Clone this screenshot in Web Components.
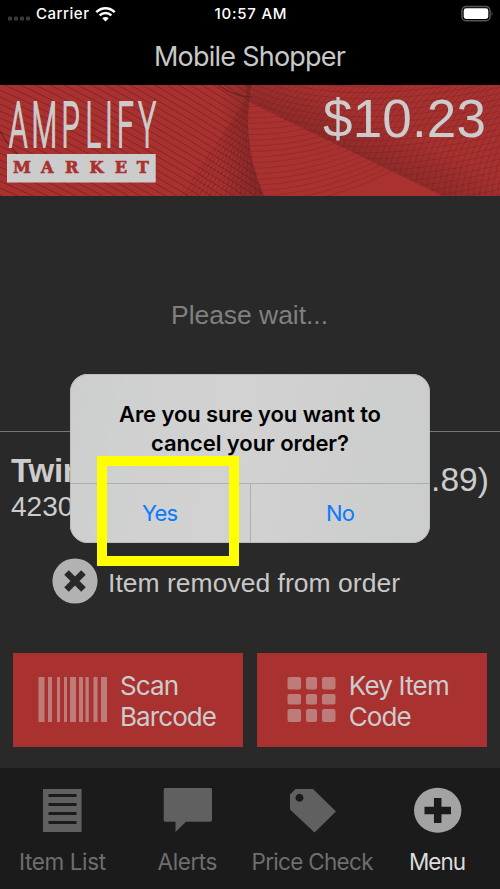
<!DOCTYPE html>
<html lang="en"><head><meta charset="utf-8"><title>Mobile Shopper</title>
<style>html,body{margin:0;background:#292929}</style></head>
<body><shopper-app></shopper-app>
<script>
const define = (name, html, setup) => customElements.define(name, class extends HTMLElement {
  constructor() {
    super();
    this.attachShadow({ mode: "open" }).innerHTML = html;
  }
  connectedCallback() { if (setup) setup(this, this.shadowRoot); }
});

/* One line of text whose tracking is set so that it fills the width given in px. */
define("fit-text", `<style>:host{display:inline-block;white-space:pre;vertical-align:top}span{display:inline-block;white-space:pre}</style><span><slot></slot></span>`, (el, root) => {
  const want = parseFloat(el.getAttribute("w"));
  const span = root.querySelector("span");
  const n = el.textContent.length;
  const have = span.getBoundingClientRect().width;
  const ls = (want - have) / (n - 1);
  span.style.letterSpacing = ls + "px";
  span.style.marginRight = -ls + "px";
});

define("status-bar", `<style>
:host{display:flex;height:28px;align-items:center;color:#fff;font:500 15px/28px Inter,sans-serif;box-sizing:border-box;padding:0 7px 0 8px}
.side{flex:1;display:flex;align-items:center}.end{justify-content:flex-end}
.dots{margin-right:5px;padding-top:8px}svg{display:block}.wifi{margin-left:6px}
</style>
<div class="side"><svg class="dots" width="23" height="5"><g fill="#3a3a3a"><rect x="0" y="0.5" width="4" height="4" rx="1.3"/><rect x="6" y="0.5" width="4" height="4" rx="1.3"/><rect x="12" y="0.5" width="4" height="4" rx="1.3"/><rect x="18" y="0.5" width="4" height="4" rx="1.3"/></g></svg>
<fit-text w="53">Carrier</fit-text>
<svg class="wifi" width="21" height="16" viewBox="0 0 21 16"><g fill="none" stroke="#fff" stroke-width="2.5"><path d="M1.3 6.1C6.6.9 14.4.9 19.7 6.1"/><path d="M4.6 9.4C8 6.2 13 6.2 16.4 9.4"/></g><path d="M10.5 15.4 7.3 12.2C9.1 10.6 11.9 10.6 13.7 12.2Z" fill="#fff"/></svg></div>
<fit-text w="72">10:57 AM</fit-text>
<div class="side end"><svg width="32" height="18" viewBox="0 0 32 18"><rect x=".9" y="1.5" width="28.2" height="14.2" rx="4.3" fill="none" stroke="#555" stroke-width="1.5"/><rect x="2.7" y="3.3" width="24.6" height="10.6" rx="2.4" fill="#fff"/><path d="M30.6 6.3q2 2.5 0 5z" fill="#555"/></svg></div>`);

define("title-bar", `<style>:host{display:flex;height:57px;align-items:center;justify-content:center;color:#c8c8c8;font:400 27px/57px Inter,sans-serif}</style><slot></slot>`);

define("market-banner", `<style>
:host{display:grid;height:111px;background:#a93230;overflow:hidden}
:host>*{grid-area:1/1}svg{display:block}
.total{justify-self:end;margin-right:14px;padding-top:5px;color:#ccc;font:53px/58px "Liberation Sans",sans-serif}
</style><svg width="500" height="111" viewBox="0 0 500 111">
<defs>
<linearGradient id="dark" x1="0" x2="1"><stop offset="0" stop-color="#591c1c" stop-opacity="0"/><stop offset="1" stop-color="#591c1c" stop-opacity=".5"/></linearGradient>
<linearGradient id="fold" gradientUnits="userSpaceOnUse" x1="348" y1="64" x2="366" y2="28"><stop offset="0" stop-color="#591c1c" stop-opacity=".32"/><stop offset="1" stop-color="#591c1c" stop-opacity=".03"/></linearGradient>
<clipPath id="left"><path d="M0 0H252Q240 55 264 111H0Z"/></clipPath>
<clipPath id="upper"><path d="M253 0H500V111H443L249 17Z"/></clipPath>
<clipPath id="lower"><path d="M249 17 443 111H264Q239 66 249 17Z"/></clipPath>
<clipPath id="net"><path d="M180 111 246 15V0H252Q240 55 264 111Z"/></clipPath></defs>
<g id="l" clip-path="url(#left)" fill="none" stroke="#701f20" stroke-width="1" stroke-opacity=".65"></g>
<g id="n" clip-path="url(#net)" fill="none" stroke="#591c1c" stroke-width=".8" stroke-opacity=".28"></g>
<rect x="220" width="45" height="111" clip-path="url(#left)" fill="url(#dark)"/>
<g id="w" clip-path="url(#lower)" fill="none" stroke="#7d2526" stroke-width="1" stroke-opacity=".45"></g>
<path d="M253 0H500V111H443L249 17Z" fill="url(#fold)"/>
<g id="u" clip-path="url(#upper)" fill="none" stroke="#651c1d" stroke-width="1" stroke-opacity=".26"></g>
<path d="M0 46Q8 62 26 76M218 0Q235 12 252 12" fill="none" stroke="#591c1c" stroke-opacity=".6" stroke-width="1.5"/>
<g fill="#ccc"><text transform="scale(.47 1)" x="19.1 66.8 130.9 181.9 223.4 249 294" y="61.8" font-family="Roboto" font-weight="300" font-size="63" stroke="#ccc" stroke-width="1.5" vector-effect="non-scaling-stroke">AMPLIFY</text><rect x="7" y="69" width="148.7" height="28.5"/></g>
<text x="13 41 65 89.5 114.8 136.8" y="88.3" fill="#a93230" stroke="#a93230" stroke-width=".7" font-family="DejaVu Serif" font-weight="700" font-size="16.2">MARKET</text>
</svg><div class="total"><fit-text w="163">$10.23</fit-text></div>`, (el, root) => {
  const put = (id, list) => root.getElementById(id).innerHTML = list.map(d => `<path d="${d}"/>`).join("");
  const range = (n, f) => Array.from({ length: n }, (_, i) => f(i));
  put("l", range(46, i => { const y = -170 + i * 7; return `M0 ${y}Q120 ${y + 52} 270 ${y + 150}`; }));
  put("n", range(30, i => { const y = i * 5 - 10; return `M170 ${y + 60}L270 ${y - 30}`; }).concat(range(28, i => `M${170 + i * 5} 111L${238 + i} 0`)));
  put("w", range(20, i => { const y = 16 + i * 5.6; return `M246 ${y}Q320 ${y + 2} 410 ${y - 45}`; }));
  put("u", range(60, i => { const x = 220 + i * 6; return `M${x} 120Q${x + 8} 40 ${x + 70} -10`; }).concat(range(32, i => { const y = -60 + i * 6; return `M240 ${y + 10}Q330 ${y + 60} 500 ${y + 20}`; })));
});

define("order-item", `<style>
:host{display:flex;justify-content:space-between;border-top:1px solid #777;box-sizing:border-box;height:112px;padding:20px 11px 0;color:#ccc;font-family:"Liberation Sans",sans-serif}
.name{font:700 33px/38px "Liberation Sans";display:block}.code{font:28px/33px "Liberation Sans";display:block}
.price{font:33.5px/38px "Liberation Sans";padding-top:9px}
</style><div><span class="name"><fit-text w="72">Twin</fit-text></span><span class="code"><fit-text w="78">42300</fit-text></span></div><div class="price"><fit-text w="88">(2.89)</fit-text></div>`);

define("removed-note", `<style>:host{display:flex;align-items:center;height:76px;padding-left:52px;color:#c8c8c8;font:26.5px/32px "Liberation Sans",sans-serif;gap:10px}svg{display:block}fit-text{padding-top:3px}</style>
<svg width="46" height="46" viewBox="0 0 46 46"><circle cx="23" cy="23" r="22.6" fill="#b2b2b2"/><path d="M14.5 14.5 31.5 31.5M31.5 14.5 14.5 31.5" stroke="#292929" stroke-width="6.4"/></svg><fit-text w="292">Item removed from order</fit-text>`);

define("action-button", `<style>:host{flex:1;display:flex;align-items:center;background:#a93230;color:#ccc;font:400 26px/31px Inter,sans-serif;height:94px;box-sizing:border-box}.t{display:flex;flex-direction:column;align-items:flex-start;padding-top:1px}::slotted(svg){display:block}</style><slot name="icon"></slot><div class="t"><slot></slot></div>`);

define("tab-item", `<style>:host{display:flex;flex-direction:column;align-items:center;width:125px;color:#6e6e6e;font:400 22.5px/30px Inter,sans-serif}:host([on]){color:#ddd}.i{height:79px;display:flex;align-items:flex-start;box-sizing:border-box;padding-top:19px}</style><div class="i"><slot name="icon"></slot></div><slot></slot>`);

define("tab-bar", `<style>:host{display:flex;height:121px;background:#1b1b1b}</style><slot></slot>`);

define("confirm-dialog", `<style>
:host{display:flex;flex-direction:column;box-sizing:border-box;width:360px;height:169px;border-radius:18px;background:linear-gradient(100deg,#cdcfce,#d2d2d2 45%,#cbcccc);color:#000;font-family:Inter,sans-serif;overflow:hidden;box-shadow:inset 0 0 0 1px #bdbdbd}
.m{height:109px;box-sizing:border-box;padding-top:26px;display:flex;flex-direction:column;align-items:center;font:600 22px/29px Inter}
.b{flex:1;display:grid;grid-template-columns:1fr 1fr;border-top:1px solid #acb0af;color:#0a7aff;font:400 22px/59px Inter;text-align:center}
.b div+div{border-left:1px solid #acb0af}
</style><div class="m"><fit-text w="262">Are you sure you want to</fit-text><fit-text w="198">cancel your order?</fit-text></div><div class="b"><div><fit-text w="36">Yes</fit-text></div><div><fit-text w="29">No</fit-text></div></div>`);

define("shopper-app", `<style>
:host{display:flex;flex-direction:column;position:relative;width:500px;height:889px;background:#292929;overflow:hidden}
.top{background:#000}
.wait{height:235px;display:flex;justify-content:center;align-items:center;color:#808080;font:26.5px/32px "Liberation Sans",sans-serif;box-sizing:border-box;padding:2px 1px 0 0}
.actions{display:flex;gap:13.5px;padding:0 13px;margin-top:34px;margin-bottom:21px}
confirm-dialog{position:absolute;left:70px;top:374px}
.mark{position:absolute;left:97px;top:456px;width:142px;height:110px;box-sizing:border-box;border:10px solid #ff0}
svg{display:block}
</style>
<div class="top"><status-bar></status-bar><title-bar><fit-text w="192">Mobile Shopper</fit-text></title-bar></div>
<market-banner></market-banner>
<div class="wait"><fit-text w="157">Please wait...</fit-text></div>
<order-item></order-item><removed-note></removed-note>
<div class="actions">
<action-button><svg slot="icon" width="107" height="94" viewBox="0 0 107 94"><g fill="#bd7b7a"><rect x="25.5" y="24" width="6" height="45"/><rect x="35" y="24" width="4" height="45"/><rect x="44" y="24" width="3" height="45"/><rect x="51" y="24" width="3" height="45"/><rect x="57" y="24" width="6" height="45"/><rect x="66" y="24" width="4" height="45"/><rect x="72.5" y="24" width="3.3" height="45"/><rect x="80.5" y="24" width="4" height="45"/><rect x="88" y="24" width="6" height="45"/></g></svg><fit-text w="59">Scan</fit-text><fit-text w="97">Barcode</fit-text></action-button>
<action-button><svg slot="icon" width="92" height="94" viewBox="0 0 92 94"><g fill="#bd7b7a"><rect x="30.5" y="24" width="13.5" height="12.5" rx="2"/><rect x="49" y="24" width="11" height="12.5" rx="2"/><rect x="65" y="24" width="13.5" height="12.5" rx="2"/><rect x="30.5" y="41" width="13.5" height="10.5" rx="2"/><rect x="49" y="41" width="11" height="10.5" rx="2"/><rect x="65" y="41" width="13.5" height="10.5" rx="2"/><rect x="30.5" y="56" width="13.5" height="13" rx="2"/><rect x="49" y="56" width="11" height="13" rx="2"/><rect x="65" y="56" width="13.5" height="13" rx="2"/></g></svg><fit-text w="101">Key Item</fit-text><fit-text w="63">Code</fit-text></action-button>
</div>
<tab-bar>
<tab-item><svg slot="icon" width="40" height="46" viewBox="0 0 40 46"><path d="M0 2H38.6V45H0Z" fill="#606060"/><path d="M5.5 8.5H33.5M5.5 17.5H33.5M5.5 26.5H33.5M5.5 35.5H33.5" stroke="#1b1b1b" stroke-width="3"/></svg><fit-text w="87">Item List</fit-text></tab-item>
<tab-item><svg slot="icon" width="50" height="46" viewBox="0 0 50 46"><path d="M2 1H48Q49 1 49 2.5V33Q49 34.7 47.5 34.7H23L12.5 45V34.7H2Q.7 34.7.7 33V2.5Q.7 1 2 1Z" fill="#606060"/></svg><fit-text w="60">Alerts</fit-text></tab-item>
<tab-item><svg slot="icon" width="48" height="46" viewBox="0 0 48 46"><path fill-rule="evenodd" d="M6.5 2H24L47 24.5 25.5 45.5 1 22.5V7.5ZM10.5 6.8a4 4 0 1 0 .01 0Z" fill="#606060"/></svg><fit-text w="122">Price Check</fit-text></tab-item>
<tab-item on><svg slot="icon" width="48" height="46" viewBox="0 0 48 46"><ellipse cx="23.7" cy="23.3" rx="23.7" ry="22.5" fill="#a3a3a3"/><path d="M23.7 11V36M10.5 23.5H37" stroke="#1b1b1b" stroke-width="7.5"/></svg><fit-text w="57">Menu</fit-text></tab-item>
</tab-bar>
<confirm-dialog></confirm-dialog><div class="mark"></div>`);
</script></body></html>
